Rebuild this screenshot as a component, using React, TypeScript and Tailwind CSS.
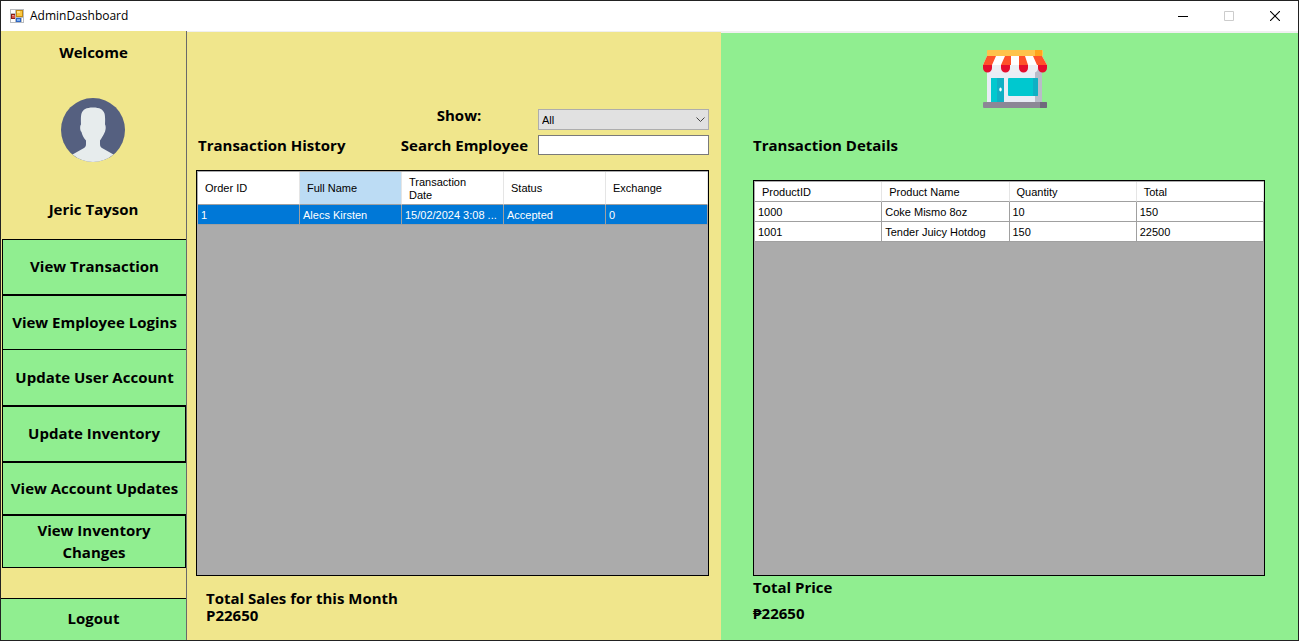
import React from "react";

type Row = string[];

const navItems = [
  { label: "View Transaction", style: "h-14 border-y border-l" },
  { label: "View Employee Logins", style: "h-[54px] border-t border-l" },
  { label: "Update User Account", style: "h-[57px] border-y border-l" },
  { label: "Update Inventory", style: "h-14 border" },
  { label: "View Account Updates", style: "h-[53px] border-y border-l" },
  { label: "View Inventory Changes", style: "h-[53px] border px-6" },
];

const historyColumns = ["Order ID", "Full Name", "Transaction Date", "Status", "Exchange"];
const historyRows: Row[] = [["1", "Alecs Kirsten", "15/02/2024 3:08 ...", "Accepted", "0"]];

const detailColumns = ["ProductID", "Product Name", "Quantity", "Total"];
const detailRows: Row[] = [
  ["1000", "Coke Mismo 8oz", "10", "150"],
  ["1001", "Tender Juicy Hotdog", "150", "22500"],
];

function FormIcon() {
  return (
    <svg width="14" height="14" viewBox="0 0 14 14" shapeRendering="crispEdges" aria-hidden="true">
      <rect width="14" height="14" fill="#b9bcc0" />
      <rect x="1" y="1" width="4" height="3" fill="#fff" />
      <rect x="1" y="10" width="4" height="3" fill="#fff" />
      <rect x="12" y="9" width="1" height="4" fill="#fff" />
      <rect x="1" y="5" width="4" height="5" fill="#8c1c13" />
      <rect x="2" y="6" width="3" height="3" fill="#d8544a" />
      <rect x="2" y="6" width="2" height="1" fill="#ee9a90" />
      <rect x="6" y="1" width="7" height="7" fill="#c48a10" />
      <rect x="7" y="2" width="5" height="5" fill="#fbc740" />
      <rect x="7" y="2" width="3" height="2" fill="#fde28a" />
      <rect x="6" y="9" width="5" height="4" fill="#2f66c4" />
      <rect x="7" y="10" width="3" height="2" fill="#7fb2f2" />
    </svg>
  );
}

function Avatar() {
  return (
    <svg width="64" height="64" viewBox="0 0 64 64" role="img" aria-label="Profile">
      <circle cx="32" cy="32" r="32" fill="#556080" />
      <path
        d="M11.5 56.5 L23 50 C24.6 49 25 47.8 25 46 V42.5 C22.5 40 21 36.5 20.5 34 C19.3 33 19 31 19.2 28.5 C19.3 27.5 19.6 27 20 26.5 C19.8 22 19.8 18 20.5 15.5 C22 11.5 25 9.5 32 9.5 C39 9.5 42 11.5 43.5 15.5 C44.2 18 44.2 22 44 26.5 C44.7 27.5 45 30 44.3 32.5 C44 34 42.5 37.5 39 42.5 V46 C39 47.8 39.4 49 41 50 L52.5 56.5 A32 32 0 0 1 11.5 56.5 Z"
        fill="#e7eced"
      />
    </svg>
  );
}

function StoreIcon() {
  return (
    <svg width="66" height="58" viewBox="0 0 66 58" role="img" aria-label="Store">
      <rect x="5" y="16" width="55" height="37" fill="#e9edf5" />
      <rect x="53" y="16" width="7" height="37" fill="#b9bcc8" />
      <rect x="5" y="0" width="56" height="6" rx="1" fill="#ffc34c" />
      <rect x="53" y="0" width="7" height="6" fill="#ffa41c" />
      <path d="M5 6H60L65 15H1Z" fill="#fff" />
      <path d="M5 6H14L10 15H1ZM23 6H29V15H19ZM37 6H43L46 15H37ZM51 6H60L65 15H55Z" fill="#ff5229" />
      <path
        d="M1 15H10V18A4.5 4.5 0 0 1 1 18ZM19 15H28V18A4.5 4.5 0 0 1 19 18ZM37 15H46V18A4.5 4.5 0 0 1 37 18ZM56 15H65V18A4.5 4.5 0 0 1 56 18Z"
        fill="#e60d2e"
      />
      <path
        d="M10 15H19V18A4.5 4.5 0 0 1 10 18ZM28 15H37V18A4.5 4.5 0 0 1 28 18ZM46 15H56V18A4.5 4.5 0 0 1 46 18Z"
        fill="#eceff3"
      />
      <rect x="9" y="28" width="13" height="24" fill="#00c8cf" />
      <rect x="15" y="28" width="7" height="24" fill="#0fb0c4" />
      <ellipse cx="18.5" cy="39.5" rx="1.2" ry="1.9" fill="#fff" />
      <rect x="26" y="28" width="30" height="18" rx="1" fill="#00c8cf" />
      <path d="M51 28H55Q56 28 56 29V45Q56 46 55 46H51Z" fill="#0fb0c4" />
      <rect x="1" y="52" width="64" height="6" rx="1" fill="#8c8796" />
      <path d="M58 52H64Q65 52 65 53V57Q65 58 64 58H58Z" fill="#6f6a7c" />
    </svg>
  );
}

interface GridProps {
  label: string;
  columns: string[];
  rows: Row[];
  headerHeight: string;
  activeColumn?: number;
  selectedRow?: number;
}

function DataGrid({ label, columns, rows, headerHeight, activeColumn, selectedRow }: GridProps) {
  return (
    <div className="flex-1 border border-black bg-[#ababab] pt-px pl-px font-['Liberation_Sans',sans-serif] text-[11px] leading-[13px] font-normal">
      <table aria-label={label} className="w-full table-fixed border-separate border-spacing-0">
        <thead>
          <tr className={headerHeight}>
            {columns.map((column, i) => (
              <th
                key={column}
                className={`border-r border-b border-r-[#e5e5e5] border-b-[#a0a0a0] pt-px pr-4 pl-[7px] text-left align-middle font-normal ${
                  i === activeColumn ? "bg-[#bcdcf4]" : "bg-white"
                }`}
              >
                {column}
              </th>
            ))}
          </tr>
        </thead>
        <tbody>
          {rows.map((row, r) => (
            <tr key={row[0]} className={r === selectedRow ? "h-5 bg-[#0078d7] text-white" : "h-5 bg-white"}>
              {row.map((cell, c) => (
                <td key={c} className="border-r border-b border-[#a0a0a0] pt-px pl-[3px] whitespace-nowrap">
                  {cell}
                </td>
              ))}
            </tr>
          ))}
        </tbody>
      </table>
    </div>
  );
}

export default function App() {
  return (
    <div className="flex min-h-screen flex-col border border-[#222] bg-[#f0f0f0] font-['Open_Sans','Noto_Sans',sans-serif] text-[15px] leading-5 text-black">
      <header className="flex h-[30px] items-center bg-white pb-px pl-[9px]">
        <FormIcon />
        <h1 className="ml-1.5 flex-1 text-xs">AdminDashboard</h1>
        <button aria-label="Minimize" className="flex h-full w-[46px] items-center justify-center">
          <svg width="10" height="10" viewBox="0 0 10 10"><path d="M0 5.5H10" stroke="#000" /></svg>
        </button>
        <button aria-label="Maximize" disabled className="flex h-full w-[46px] items-center justify-center">
          <svg width="10" height="10" viewBox="0 0 10 10"><path d="M.5.5H9.5V9.5H.5Z" fill="none" stroke="#ccc" /></svg>
        </button>
        <button aria-label="Close" className="flex h-full w-[46px] items-center justify-center">
          <svg width="10" height="10" viewBox="0 0 10 10"><path d="M0 0L10 10M10 0L0 10" stroke="#000" strokeWidth="1.1" /></svg>
        </button>
      </header>

      <div className="grid flex-1 grid-cols-[186px_minmax(0,534fr)_minmax(0,577fr)] font-bold">
        <aside className="flex flex-col border-r border-[#696969] bg-[#f0e68c]">
          <p className="mt-[11px] text-center">Welcome</p>
          <div className="mt-9 flex justify-center pr-px">
            <Avatar />
          </div>
          <p className="mt-[37px] text-center">Jeric Tayson</p>
          <nav className="mt-5 flex flex-col pl-px">
            {navItems.map((item) => (
              <button
                key={item.label}
                className={`border-black bg-[#90ee90] pb-0.5 text-center leading-[22px] ${item.style}`}
              >
                {item.label}
              </button>
            ))}
          </nav>
          <button className="mt-auto h-[42px] border-t border-black bg-[#90ee90] pb-1">Logout</button>
        </aside>

        <main className="mt-px flex flex-col bg-[#f0e68c] pt-[77px] pr-3 pl-[9px]">
          <div className="flex items-end justify-between">
            <h2 className="pl-0.5">Transaction History</h2>
            <div className="grid grid-cols-[130px_171px] gap-x-2.5 gap-y-[5px]">
              <label htmlFor="show" className="-mt-1 pr-2 text-center">Show:</label>
              <div className="relative">
                <select
                  id="show"
                  defaultValue="All"
                  className="block h-[21px] w-full appearance-none border border-[#adadad] bg-[#e1e1e1] pl-[3px] font-['Liberation_Sans',sans-serif] text-[11px] font-normal"
                >
                  <option>All</option>
                </select>
                <svg className="pointer-events-none absolute top-2 right-1" width="9" height="6" viewBox="0 0 9 6">
                  <path d="M.5.5L4.5 4.5L8.5.5" fill="none" stroke="#444" />
                </svg>
              </div>
              <label htmlFor="search" className="text-right whitespace-nowrap">Search Employee</label>
              <input
                id="search"
                type="text"
                className="h-5 w-full border border-[#7a7a7a] bg-white px-1 font-['Liberation_Sans',sans-serif] text-[11px] font-normal"
              />
            </div>
          </div>
          <div className="mt-[15px] flex flex-1 flex-col">
            <DataGrid
              label="Transaction History"
              columns={historyColumns}
              rows={historyRows}
              headerHeight="h-[33px]"
              activeColumn={1}
              selectedRow={0}
            />
          </div>
          <div className="h-16 pt-3.5 pl-2.5 leading-[17px]">
            <p>
              Total Sales for this Month
              <br />
              P22650
            </p>
          </div>
        </main>

        <section className="mt-0.5 flex flex-col bg-[#90ee90] pt-[17px] pr-[33px] pl-8">
          <div className="flex justify-center pl-3">
            <StoreIcon />
          </div>
          <h2 className="mt-[27px]">Transaction Details</h2>
          <div className="mt-[25px] flex flex-1 flex-col">
            <DataGrid
              label="Transaction Details"
              columns={detailColumns}
              rows={detailRows}
              headerHeight="h-5"
            />
          </div>
          <div className="h-16 pt-px">
            <p>Total Price</p>
            <p className="mt-1.5">₱22650</p>
          </div>
        </section>
      </div>
    </div>
  );
}
